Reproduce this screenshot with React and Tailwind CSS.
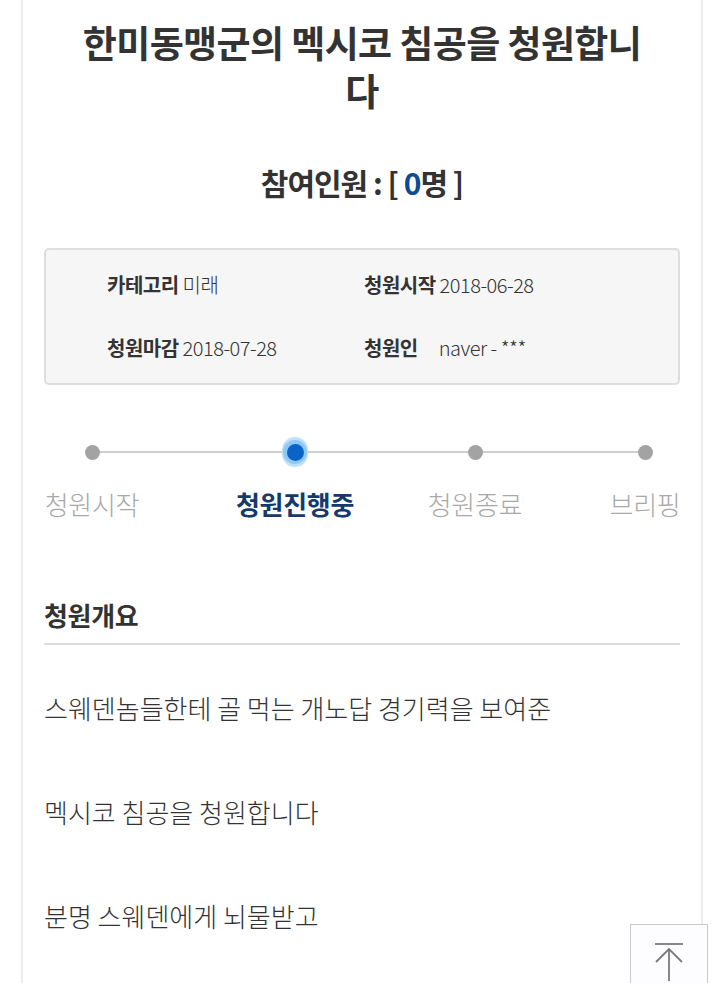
import React from 'react';

const font = { fontFamily: '"Noto Sans CJK KR", "Noto Sans", sans-serif' };

const steps = [
  { label: '청원시작', state: 'done', box: 'w-[96px]' },
  { label: '청원진행중', state: 'active', box: 'ml-[95px] w-[120px]' },
  { label: '청원종료', state: 'todo', box: 'ml-[72px] w-[96px]' },
  { label: '브리핑', state: 'todo', box: 'ml-[87px] w-[70px]' },
];

const paragraphs = [
  '스웨덴놈들한테 골 먹는 개노답 경기력을 보여준',
  '멕시코 침공을 청원합니다',
  '분명 스웨덴에게 뇌물받고',
];

function InfoItem({ label, value, gap = 'ml-1' }) {
  return (
    <div className="flex items-center h-[28px] tracking-[-0.5px] text-[20px] text-[#333]">
      <span className="font-bold">{label}</span>
      <span className={`${gap} font-light`}>{value}</span>
    </div>
  );
}

function Progress() {
  return (
    <div className="relative mt-[54px] flex">
      {/* connector behind the dots */}
      <div className="absolute left-[48px] right-[35px] top-[12px] h-[2px] bg-[#cfcfcf]" />
      {steps.map((s) => (
        <div key={s.label} className={`relative flex shrink-0 flex-col items-center ${s.box}`}>
          <div className="flex h-[26px] w-[26px] items-center justify-center">
            {s.state === 'active' ? (
              <div className="flex h-[30px] w-[30px] items-center justify-center rounded-full bg-[#bfe0fa]">
                <div className="flex h-[24px] w-[24px] items-center justify-center rounded-full bg-[#8fc8f3]">
                  <div className="h-[17px] w-[17px] rounded-full bg-[#0b63c8]" />
                </div>
              </div>
            ) : (
              <div className="h-[15px] w-[15px] rounded-full bg-[#a3a3a3]" />
            )}
          </div>
          <div
            className={`mt-[22px] whitespace-nowrap text-[26px] leading-[34px] tracking-[-0.3px] ${
              s.state === 'active' ? 'font-bold text-[#143a6b]' : 'font-light text-[#a8a8a8]'
            }`}
          >
            {s.label}
          </div>
        </div>
      ))}
    </div>
  );
}

function TopButton() {
  return (
    <button className="fixed right-[12px] top-[924px] flex h-[78px] w-[78px] items-start justify-center border border-[#c9c9c9] bg-[#fdfcfe] pt-[18px]">
      <svg width="30" height="38" viewBox="0 0 30 38" fill="none" stroke="#7a7a7a" strokeWidth="1.8">
        <path d="M1 1h28" />
        <path d="M15 6v32" />
        <path d="M2 19L15 6l13 13" />
      </svg>
    </button>
  );
}

export default function App() {
  return (
    <div className="min-h-screen bg-white" style={font}>
      <div className="ml-[21px] w-[682px] min-h-screen border-x-2 border-[#ececec] px-[21px]">
        <h1 className="mx-auto w-[580px] pt-[18px] text-center text-[37px] font-bold leading-[48px] tracking-[-0.6px] text-[#333]">
          한미동맹군의 멕시코 침공을 청원합니다
        </h1>

        <div className="mt-[48px] text-center text-[30px] font-bold leading-[40px] tracking-[-1px] text-[#333]">
          참여인원 : [ <span className="text-[#0d4a96]">0</span>명 ]
        </div>

        {/* petition meta */}
        <div className="mt-[46px] rounded-[5px] border-2 border-[#dedede] bg-[#f6f6f6] py-[21px] pl-[61px]">
          <div className="grid grid-cols-[257px_1fr] gap-y-[35px]">
            <InfoItem label="카테고리" value="미래" />
            <InfoItem label="청원시작" value="2018-06-28" />
            <InfoItem label="청원마감" value="2018-07-28" />
            <InfoItem label="청원인" value="naver - ***" gap="ml-[21px]" />
          </div>
        </div>

        <Progress />

        <h2 className="mt-[76px] border-b-2 border-[#dddddd] pb-[10px] text-[26px] font-bold leading-[36px] tracking-[-0.3px] text-[#333]">
          청원개요
        </h2>

        <div className="pt-[46px]">
          {paragraphs.map((p) => (
            <p key={p} className="mb-[70px] text-[26px] font-light leading-[34px] text-[#333]">
              {p}
            </p>
          ))}
        </div>
      </div>
      <TopButton />
    </div>
  );
}
